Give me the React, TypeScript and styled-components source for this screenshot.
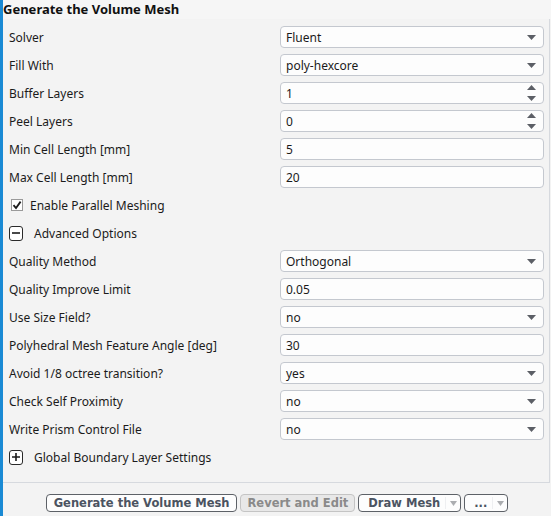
import React from 'react';
import styled, { createGlobalStyle } from 'styled-components';

const GlobalStyle = createGlobalStyle`
  html, body {
    margin: 0;
    padding: 0;
    background: #f3f3f3;
  }
  body {
    font-family: "Noto Sans", "Liberation Sans", sans-serif;
    color: #1b1b1b;
  }
`;

type Field =
  | { kind: 'select'; label: string; value: string }
  | { kind: 'spin'; label: string; value: string }
  | { kind: 'text'; label: string; value: string };

const basicFields: Field[] = [
  { kind: 'select', label: 'Solver', value: 'Fluent' },
  { kind: 'select', label: 'Fill With', value: 'poly-hexcore' },
  { kind: 'spin', label: 'Buffer Layers', value: '1' },
  { kind: 'spin', label: 'Peel Layers', value: '0' },
  { kind: 'text', label: 'Min Cell Length [mm]', value: '5' },
  { kind: 'text', label: 'Max Cell Length [mm]', value: '20' },
];

const advancedFields: Field[] = [
  { kind: 'select', label: 'Quality Method', value: 'Orthogonal' },
  { kind: 'text', label: 'Quality Improve Limit', value: '0.05' },
  { kind: 'select', label: 'Use Size Field?', value: 'no' },
  { kind: 'text', label: 'Polyhedral Mesh Feature Angle [deg]', value: '30' },
  { kind: 'select', label: 'Avoid 1/8 octree transition?', value: 'yes' },
  { kind: 'select', label: 'Check Self Proximity', value: 'no' },
  { kind: 'select', label: 'Write Prism Control File', value: 'no' },
];

const DownArrow: React.FC<{ w?: number }> = ({ w = 9 }) => (
  <svg width={w} height="5" viewBox="0 0 9 5" preserveAspectRatio="none">
    <path d="M0 0 L9 0 L4.5 5 Z" fill="#5c5f66" />
  </svg>
);

const SpinArrows = () => (
  <svg width="9" height="16" viewBox="0 0 9 16">
    <path d="M4.5 0 L9 5 L0 5 Z" fill="#5c5f66" />
    <path d="M0 11 L9 11 L4.5 16 Z" fill="#5c5f66" />
  </svg>
);

const FieldRow: React.FC<{ field: Field }> = ({ field }) => (
  <Row>
    <Label>{field.label}</Label>
    <InputBox>
      <InputValue>{field.value}</InputValue>
      {field.kind === 'select' && (
        <Adornment>
          <DownArrow />
        </Adornment>
      )}
      {field.kind === 'spin' && (
        <Adornment>
          <SpinArrows />
        </Adornment>
      )}
    </InputBox>
  </Row>
);

const App: React.FC = () => {
  return (
    <>
      <GlobalStyle />
      <Frame>
        <Title>Generate the Volume Mesh</Title>
        <Panel>
          {basicFields.map((f) => (
            <FieldRow key={f.label} field={f} />
          ))}
          <Row>
            <CheckWrap>
              <CheckBox>
                <svg width="10" height="10" viewBox="0 0 10 10">
                  <path d="M1.5 5.2 L4 8 L8.6 1.6" stroke="#1b1b1b" strokeWidth="1.8" fill="none" />
                </svg>
              </CheckBox>
              <Label>Enable Parallel Meshing</Label>
            </CheckWrap>
          </Row>
          <Row>
            <ToggleWrap>
              <ToggleBox>
                <svg width="8" height="8" viewBox="0 0 8 8">
                  <path d="M0 4 H8" stroke="#1b1b1b" strokeWidth="1.6" />
                </svg>
              </ToggleBox>
              <Label>Advanced Options</Label>
            </ToggleWrap>
          </Row>
          {advancedFields.map((f) => (
            <FieldRow key={f.label} field={f} />
          ))}
          <Row>
            <ToggleWrap>
              <ToggleBox>
                <svg width="8" height="8" viewBox="0 0 8 8">
                  <path d="M0 4 H8 M4 0 V8" stroke="#1b1b1b" strokeWidth="1.6" />
                </svg>
              </ToggleBox>
              <Label>Global Boundary Layer Settings</Label>
            </ToggleWrap>
          </Row>
        </Panel>
        <Footer>
          <ActionButton>Generate the Volume Mesh</ActionButton>
          <ActionButton disabled>Revert and Edit</ActionButton>
          <ActionButton $menu>
            Draw Mesh
            <MenuCaret>
              <DownArrow w={7} />
            </MenuCaret>
          </ActionButton>
          <ActionButton $menu>
            ...
            <MenuCaret>
              <DownArrow w={7} />
            </MenuCaret>
          </ActionButton>
        </Footer>
      </Frame>
    </>
  );
};

const Frame = styled.div`
  width: 551px;
  height: 516px;
  box-sizing: border-box;
  border-left: 3px solid #1a8ad4;
  display: flex;
  flex-direction: column;
  background: #f3f3f3;
  overflow: hidden;
`;

const Title = styled.div`
  height: 19px;
  line-height: 18px;
  font-size: 13px;
  font-weight: 700;
  color: #111;
  background: #f6f6f6;
  white-space: nowrap;
`;

const Panel = styled.div`
  flex: 0 0 auto;
  height: 464px;
  box-sizing: border-box;
  padding: 4px 5px 0 6px;
  border-right: 1px solid #d6d9de;
  border-bottom: 1px solid #d6d9de;
  margin-right: 1px;
  display: flex;
  flex-direction: column;
`;

const Row = styled.div`
  height: 28px;
  display: flex;
  align-items: center;
  justify-content: space-between;
`;

const Label = styled.span`
  font-size: 12px;
  color: #1b1b1b;
  white-space: nowrap;
`;

const InputBox = styled.div`
  width: 264px;
  height: 22px;
  box-sizing: border-box;
  border: 1px solid #c4c8cf;
  border-radius: 4px;
  background: #fdfdfd;
  display: flex;
  align-items: center;
  padding: 0 7px 0 5px;
`;

const InputValue = styled.span`
  flex: 1;
  font-size: 12px;
  color: #1b1b1b;
`;

const Adornment = styled.span`
  display: flex;
  align-items: center;
`;

const CheckWrap = styled.label`
  display: flex;
  align-items: center;
  gap: 7px;
  padding-left: 2px;
`;

const CheckBox = styled.span`
  width: 12px;
  height: 12px;
  box-sizing: border-box;
  border: 1px solid #9a9a9a;
  background: #fff;
  display: flex;
  align-items: center;
  justify-content: center;
`;

const ToggleWrap = styled.div`
  display: flex;
  align-items: center;
  gap: 11px;
`;

const ToggleBox = styled.span`
  width: 14px;
  height: 15px;
  box-sizing: border-box;
  border: 1.5px solid #2a2a2a;
  border-radius: 3px;
  background: #fff;
  display: flex;
  align-items: center;
  justify-content: center;
`;

const Footer = styled.div`
  flex: 1;
  display: flex;
  justify-content: center;
  align-items: flex-start;
  gap: 3px;
  padding: 11px 0 0 0;
`;

const ActionButton = styled.button<{ $menu?: boolean }>`
  height: 18px;
  box-sizing: border-box;
  padding: 0 ${(p) => (p.$menu ? '3px' : '7px')} 0 ${(p) => (p.$menu ? '9px' : '7px')};
  border: 1px solid #5d6167;
  border-radius: 4px;
  background: #fdfdfd;
  font-family: "DejaVu Sans", "Noto Sans", sans-serif;
  font-size: 11.5px;
  font-weight: 700;
  color: #4b5361;
  display: flex;
  align-items: center;
  gap: 5px;
  white-space: nowrap;
  cursor: pointer;

  &:disabled {
    border-color: #c4c4c4;
    background: #e8e8e8;
    color: #8a8a8a;
    cursor: default;
    padding: 0 6px;
  }
`;

const MenuCaret = styled.span`
  display: flex;
  align-items: center;
  padding-left: 4px;
  border-left: 1px solid #e0e2e6;
  height: 12px;
  opacity: 0.5;
`;

export default App;
